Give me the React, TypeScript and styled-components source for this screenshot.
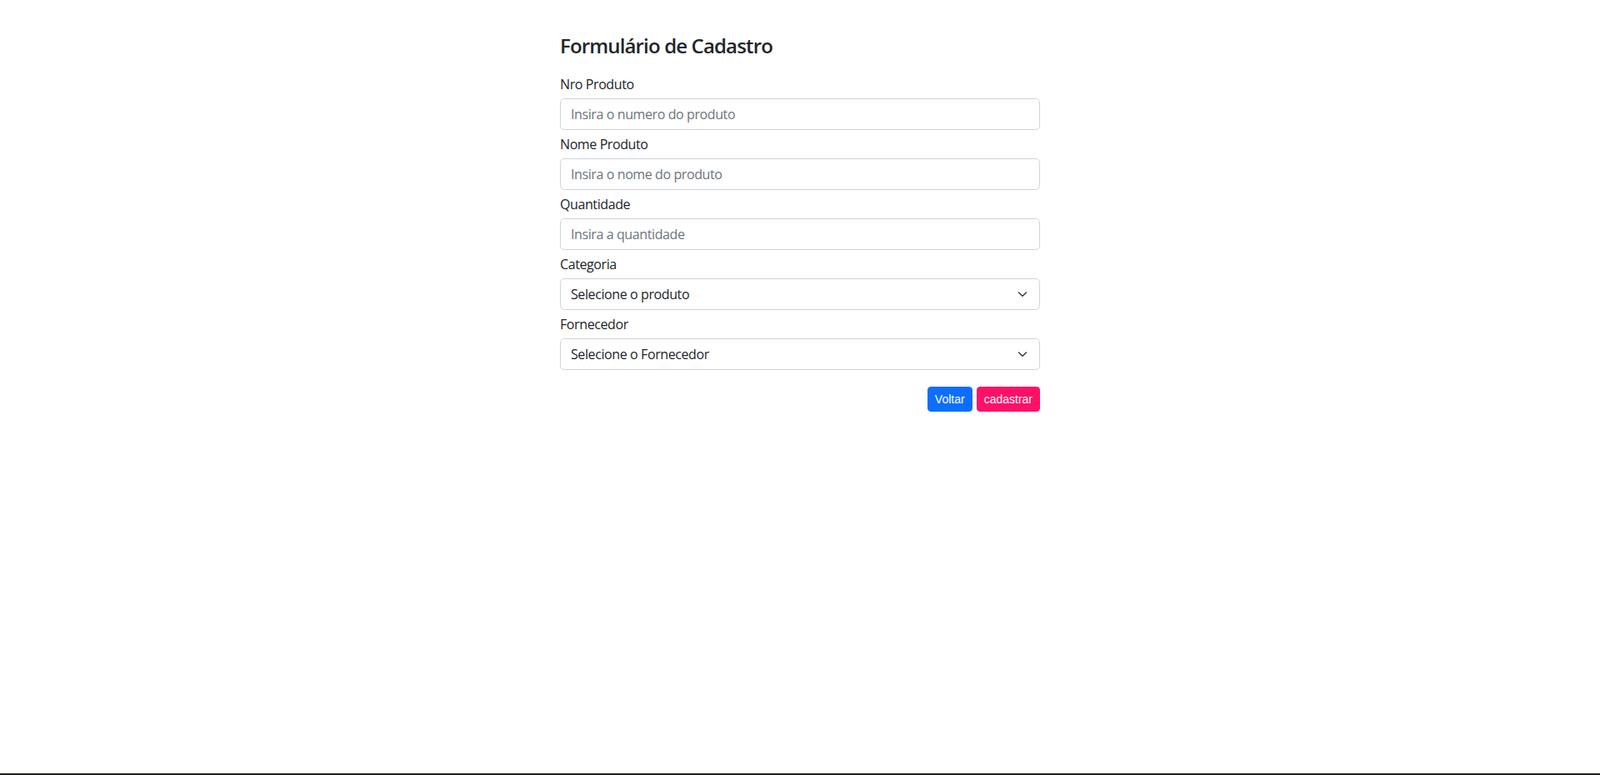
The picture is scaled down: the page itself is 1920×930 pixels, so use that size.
import * as React from 'react';
import styled, { createGlobalStyle } from 'styled-components';

const GlobalStyle = createGlobalStyle`
  body {
    margin: 0;
    background: #fff;
    color: #212529;
    font-family: "Segoe UI", "Open Sans", "Liberation Sans", sans-serif;
  }
  *, *::before, *::after {
    box-sizing: border-box;
  }
`;

const Page = styled.div`
  min-height: 930px;
  display: flex;
  flex-direction: column;
  border-bottom: 2px solid #231b18;
`;

const Form = styled.form`
  width: 576px;
  margin: 0 auto;
  padding-top: 41px;
`;

const Title = styled.h4`
  margin: 0 0 14px;
  font-size: 24px;
  font-weight: 600;
  letter-spacing: -0.85px;
  line-height: 1.2;
  color: #212529;
`;

const Field = styled.div`
  padding-top: 5px;
`;

const Label = styled.label`
  display: block;
  margin-bottom: 5px;
  font-size: 16px;
  line-height: 24px;
  letter-spacing: -0.4px;
  color: #212529;
`;

const controlStyle = `
  display: block;
  width: 100%;
  height: 38px;
  padding: 6px 12px;
  font-family: inherit;
  font-size: 16px;
  line-height: 24px;
  letter-spacing: -0.4px;
  color: #212529;
  background: #fff;
  border: 1px solid #ced4da;
  border-radius: 5px;
  outline: none;
`;

const Input = styled.input`
  ${controlStyle};
  &::placeholder {
    color: #6c757d;
    opacity: 1;
  }
`;

const SelectWrap = styled.div`
  position: relative;
`;

const Select = styled.select`
  ${controlStyle};
  appearance: none;
  padding-right: 36px;
`;

const Chevron = styled.svg`
  position: absolute;
  right: 15px;
  top: 50%;
  transform: translateY(-50%);
  pointer-events: none;
`;

const Actions = styled.div`
  display: flex;
  justify-content: flex-end;
  gap: 5px;
  margin-top: 20px;
`;

const Button = styled.button<{ $tone: string }>`
  height: 30px;
  padding: 4px 8px;
  font-family: "Liberation Sans", Arial, sans-serif;
  font-size: 14px;
  line-height: 20px;
  color: #fff;
  background: ${p => p.$tone};
  border: 1px solid ${p => p.$tone};
  border-radius: 4px;
  cursor: pointer;
`;

const TextField = ({ label, placeholder }: { label: string; placeholder: string }) => (
  <Field>
    <Label>{label}</Label>
    <Input type="text" placeholder={placeholder} />
  </Field>
);

const SelectField = ({ label, option }: { label: string; option: string }) => (
  <Field>
    <Label>{label}</Label>
    <SelectWrap>
      <Select defaultValue="">
        <option value="">{option}</option>
      </Select>
      <Chevron width="12" height="8" viewBox="0 0 12 8">
        <path
          d="M1.5 2 6 6.2 10.5 2"
          fill="none"
          stroke="#343a40"
          strokeWidth="1.5"
          strokeLinecap="round"
          strokeLinejoin="round"
        />
      </Chevron>
    </SelectWrap>
  </Field>
);

export default function App() {
  return (
    <>
      <GlobalStyle />
      <Page>
        <Form onSubmit={e => e.preventDefault()}>
          <Title>Formulário de Cadastro</Title>
          <TextField label="Nro Produto" placeholder="Insira o numero do produto" />
          <TextField label="Nome Produto" placeholder="Insira o nome do produto" />
          <TextField label="Quantidade" placeholder="Insira a quantidade" />
          <SelectField label="Categoria" option="Selecione o produto" />
          <SelectField label="Fornecedor" option="Selecione o Fornecedor" />
          <Actions>
            <Button type="button" $tone="#0d6efd">Voltar</Button>
            <Button type="submit" $tone="#fe1068">cadastrar</Button>
          </Actions>
        </Form>
      </Page>
    </>
  );
}
